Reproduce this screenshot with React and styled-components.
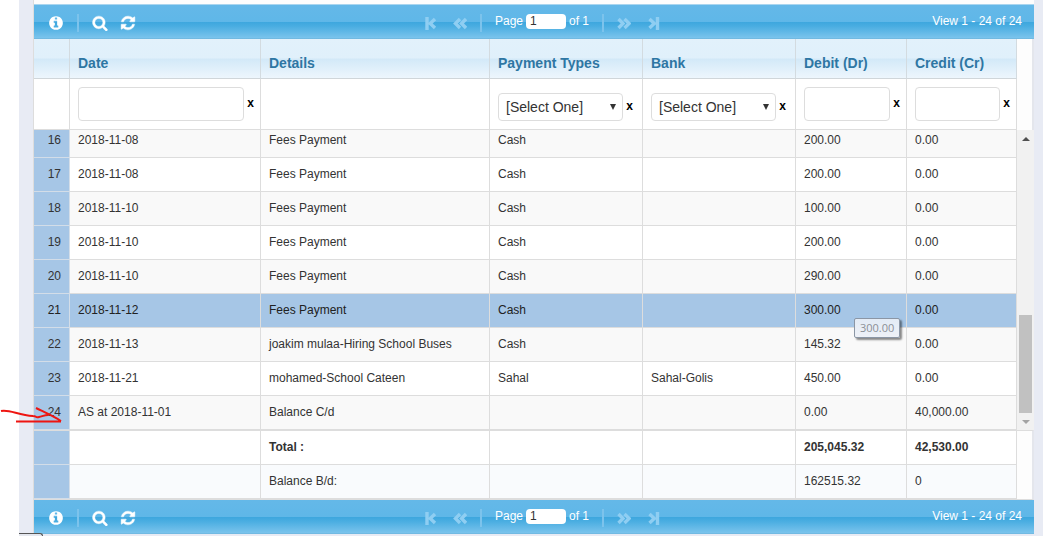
import React from "react";
import styled, { createGlobalStyle } from "styled-components";

const columns = [
  { key: "date", label: "Date", width: 191, filter: "text" },
  { key: "details", label: "Details" },
  { key: "type", label: "Payment Types", width: 153, filter: "select" },
  { key: "bank", label: "Bank", width: 153, filter: "select" },
  { key: "debit", label: "Debit (Dr)", width: 111, filter: "text" },
  { key: "credit", label: "Credit (Cr)", width: 110, filter: "text" },
];

const rows = [
  [16, "2018-11-08", "Fees Payment", "Cash", "", "200.00", "0.00"],
  [17, "2018-11-08", "Fees Payment", "Cash", "", "200.00", "0.00"],
  [18, "2018-11-10", "Fees Payment", "Cash", "", "100.00", "0.00"],
  [19, "2018-11-10", "Fees Payment", "Cash", "", "200.00", "0.00"],
  [20, "2018-11-10", "Fees Payment", "Cash", "", "290.00", "0.00"],
  [21, "2018-11-12", "Fees Payment", "Cash", "", "300.00", "0.00"],
  [22, "2018-11-13", "joakim mulaa-Hiring School Buses", "Cash", "", "145.32", "0.00"],
  [23, "2018-11-21", "mohamed-School Cateen", "Sahal", "Sahal-Golis", "450.00", "0.00"],
  [24, "AS at 2018-11-01", "Balance C/d", "", "", "0.00", "40,000.00"],
];

const hoveredRow = 21;

const Columns = () => (
  <colgroup>
    <col width="36" />
    {columns.map(({ key, width }) => (
      <col key={key} width={width} />
    ))}
  </colgroup>
);

const icons = {
  info: "M1152 1376v-160q0-14-9-23t-23-9h-96v-512q0-14-9-23t-23-9h-320q-14 0-23 9t-9 23v160q0 14 9 23t23 9h96v320h-96q-14 0-23 9t-9 23v160q0 14 9 23t23 9h448q14 0 23-9t9-23zm-128-896v-160q0-14-9-23t-23-9h-192q-14 0-23 9t-9 23v160q0 14 9 23t23 9h192q14 0 23-9t9-23zm640 416q0 209-103 385.5t-279.5 279.5-385.5 103-385.5-103-279.5-279.5-103-385.5 103-385.5 279.5-279.5 385.5-103 385.5 103 279.5 279.5 103 385.5z",
  search:
    "M1216 832q0-185-131.5-316.5t-316.5-131.5-316.5 131.5-131.5 316.5 131.5 316.5 316.5 131.5 316.5-131.5 131.5-316.5zm512 832q0 52-38 90t-90 38q-54 0-90-38l-343-342q-179 124-399 124-143 0-273.5-55.5t-225-150-150-225-55.5-273.5 55.5-273.5 150-225 225-150 273.5-55.5 273.5 55.5 225 150 150 225 55.5 273.5q0 220-124 399l343 343q37 37 37 90z",
  refresh:
    "M1639 1056q0 5-1 7-64 268-268 434.5t-478 166.5q-146 0-282.5-55t-243.5-157l-129 129q-19 19-45 19t-45-19-19-45v-448q0-26 19-45t45-19h448q26 0 45 19t19 45-19 45l-137 137q71 66 161 102t187 36q134 0 250-65t186-179q11-17 53-117 8-23 30-23h192q13 0 22.5 9.5t9.5 22.5zm25-800v448q0 26-19 45t-45 19h-448q-26 0-45-19t-19-45 19-45l138-138q-148-137-349-137-134 0-250 65t-186 179q-11 17-53 117-8 23-30 23h-199q-13 0-22.5-9.5t-9.5-22.5v-7q65-268 270-434.5t480-166.5q146 0 284 55.5t245 156.5l130-129q19-19 45-19t45 19 19 45z",
};

const ToolIcon = ({ name }) => (
  <svg width="16" height="16" viewBox="0 0 1792 1792" fill="#fff">
    <path
      d={icons[name]}
      stroke="#fff"
      strokeWidth={name === "info" ? 0 : 50}
    />
  </svg>
);

const arrows = {
  first: "M4 1V14M12 3L7.200 7.500L12 12",
  prev: "M7 3L2.500 7.500L7 12M13 3L8.500 7.500L13 12",
  next: "M1.500 3L6 7.500L1.500 12M7.500 3L12 7.500L7.500 12",
  last: "M10.500 1V14M2.500 3L7.300 7.500L2.500 12",
};

const Arrow = ({ name }) => (
  <svg width="14" height="14" viewBox="0 0 14 14" fill="none">
    <path d={arrows[name]} stroke="#8fcef2" strokeWidth="3.4" />
  </svg>
);

const Pager = ({ id }) => (
  <Toolbar>
    <Tools>
      <IconButton aria-label="View record">
        <ToolIcon name="info" />
      </IconButton>
      <Separator />
      <IconButton aria-label="Search">
        <ToolIcon name="search" />
      </IconButton>
      <IconButton aria-label="Reload">
        <ToolIcon name="refresh" />
      </IconButton>
    </Tools>
    <Pages>
      <PageButton aria-label="First page" disabled>
        <Arrow name="first" />
      </PageButton>
      <PageButton aria-label="Previous page" disabled>
        <Arrow name="prev" />
      </PageButton>
      <Separator $tight />
      <PageLabel>
        <label htmlFor={id}>Page</label>
        <PageInput id={id} defaultValue="1" />
        <span>of 1</span>
      </PageLabel>
      <Separator $tight />
      <PageButton aria-label="Next page" disabled>
        <Arrow name="next" />
      </PageButton>
      <PageButton aria-label="Last page" disabled>
        <Arrow name="last" />
      </PageButton>
    </Pages>
    <Summary>View 1 - 24 of 24</Summary>
  </Toolbar>
);

const Filter = ({ column }) => {
  if (!column.filter) return null;
  return (
    <FilterBox $select={column.filter === "select"}>
      {column.filter === "select" ? (
        <SelectBox>
          <Select aria-label={column.label}>
            <option>[Select One]</option>
          </Select>
          <svg width="6" height="6" viewBox="0 0 6 6" fill="#333">
            <path d="M0 0H6L3 6Z" />
          </svg>
        </SelectBox>
      ) : (
        <TextInput aria-label={column.label} />
      )}
      <Clear aria-label={`Clear ${column.label}`}>x</Clear>
    </FilterBox>
  );
};

const Triangle = ({ up }) => (
  <svg width="8" height="4" viewBox="0 0 8 4" fill={up ? "#505050" : "#a3a3a3"}>
    <path d={up ? "M0 4L4 0L8 4Z" : "M0 0L4 4L8 0Z"} />
  </svg>
);

const App = () => (
  <>
    <GlobalStyle />
    <Page>
      <Panel>
        <Pager id="page-top" />
        <Section>
          <Table>
            <Columns />
            <thead>
              <tr>
                <HeadCell />
                {columns.map((column) => (
                  <HeadCell key={column.key}>{column.label}</HeadCell>
                ))}
              </tr>
              <tr>
                <FilterCell />
                {columns.map((column) => (
                  <FilterCell key={column.key}>
                    <Filter column={column} />
                  </FilterCell>
                ))}
              </tr>
            </thead>
          </Table>
        </Section>
        <Body>
          <Viewport>
            <Table>
              <Columns />
              <tbody>
                {rows.map(([number, ...cells]) => (
                  <Row key={number} $active={number === hoveredRow}>
                    <NumberCell>{number}</NumberCell>
                    {cells.map((cell, i) => (
                      <Cell key={columns[i].key}>
                        {cell}
                        {number === hoveredRow && columns[i].key === "debit" && (
                          <Tooltip>{cell}</Tooltip>
                        )}
                      </Cell>
                    ))}
                  </Row>
                ))}
              </tbody>
            </Table>
          </Viewport>
          <Scrollbar>
            <ScrollEnd>
              <Triangle up />
            </ScrollEnd>
            <Thumb />
            <ScrollEnd>
              <Triangle />
            </ScrollEnd>
          </Scrollbar>
        </Body>
        <Section $footer>
          <Table>
            <Columns />
            <tbody>
              <TotalRow $bold>
                <NumberCell />
                <Cell />
                <Cell>Total :</Cell>
                <Cell />
                <Cell />
                <Cell>205,045.32</Cell>
                <Cell>42,530.00</Cell>
              </TotalRow>
              <TotalRow>
                <NumberCell />
                <Cell />
                <Cell>Balance B/d:</Cell>
                <Cell />
                <Cell />
                <Cell>162515.32</Cell>
                <Cell>0</Cell>
              </TotalRow>
            </tbody>
          </Table>
        </Section>
        <Pager id="page-bottom" />
      </Panel>
      <Annotation width="64" height="20" viewBox="0 0 64 20">
        <path d="M1 4C9 2 18 8 33 9C37 9 35 11 39 10C43 9 45 8 48 8M36 1C44 5 53 9 61 14M16 14.500H61" />
      </Annotation>
      <StatusCorner />
    </Page>
  </>
);

const GlobalStyle = createGlobalStyle`
  * {
    box-sizing: border-box;
  }
  body {
    margin: 0;
    background: #fff;
    color: #333;
    font-family: "Liberation Sans", Arial, sans-serif;
    font-size: 12px;
    line-height: 16px;
  }
  button, input, select {
    font: inherit;
    color: inherit;
  }
  svg {
    display: block;
  }
`;

const Page = styled.div`
  position: relative;
  min-height: 100vh;
  margin-left: 19px;
  padding: 0 9px 0 14px;
  background: #e8ebf4;
`;

const Panel = styled.div`
  padding-top: 4px;
  border-left: 1px solid #ddd;
  background: #fdfdfd;
`;

const Toolbar = styled.div`
  display: flex;
  align-items: center;
  height: 35px;
  padding: 2px 12px 0 8px;
  border-top: 1px solid #a9d5ef;
  background: linear-gradient(
    #64b8e8 0,
    #5fb7e8 50%,
    #3ea7de 51%,
    #49ade1 62%,
    #79c3ec 96%,
    #6db4dc 100%
  );
  color: #fff;
  &:last-child {
    height: 34px;
    border-top: 0;
  }
`;

const Tools = styled.div`
  display: flex;
  flex: 1;
  align-items: center;
`;

const Pages = styled.div`
  display: flex;
  align-items: center;
  padding-left: 20px;
`;

const Summary = styled.div`
  flex: 1;
  padding-bottom: 4px;
  text-align: right;
`;

const IconButton = styled.button`
  display: flex;
  align-items: center;
  justify-content: center;
  width: 28px;
  height: 28px;
  padding: 0;
  border: 0;
  background: none;
`;

const PageButton = styled(IconButton)`
  width: 30px;
`;

const Separator = styled.span`
  width: 2px;
  height: 18px;
  margin: 0 ${({ $tight }) => ($tight ? 5 : 7)}px;
  background: #7cc3ec;
`;

const PageLabel = styled.div`
  display: flex;
  align-items: center;
  gap: 3px;
  padding: 0 8px 4px;
`;

const PageInput = styled.input`
  width: 40px;
  height: 15px;
  padding: 0 4px;
  border: 0;
  border-radius: 4px;
  background: #fff;
  color: #333;
`;

const Section = styled.div`
  padding-right: 15px;
  border: solid #ddd;
  border-width: ${({ $footer }) => ($footer ? "1px 2px 1px 0" : "0 2px 0 0")};
  border-right-color: #e4e6ec;
`;

const Table = styled.table`
  width: 100%;
  table-layout: fixed;
  border-collapse: separate;
  border-spacing: 0;
`;

const HeadCell = styled.th`
  height: 40px;
  padding: 8px 8px 0;
  border-right: 1px solid #d3dbe0;
  border-bottom: 1px solid #d0d6da;
  background: linear-gradient(#e2f1fb 0, #e0f0fb 48%, #d3e9f8 52%, #edf6fd 100%);
  color: #2e76a3;
  font-size: 14px;
  text-align: left;
`;

const FilterCell = styled.th`
  height: 51px;
  padding: 0 6px 0 8px;
  border-right: 1px solid #ddd;
  border-bottom: 1px solid #ddd;
  background: #fff;
`;

const FilterBox = styled.div`
  display: flex;
  align-items: center;
  gap: 3px;
  padding: ${({ $select }) => ($select ? "5px 3px 0 0" : 0)};
`;

const TextInput = styled.input`
  flex: 1;
  min-width: 0;
  height: 34px;
  padding: 6px 8px;
  border: 1px solid #ddd;
  border-radius: 4px;
  background: #fff;
`;

const SelectBox = styled.div`
  display: flex;
  flex: 1;
  align-items: center;
  min-width: 0;
  height: 28px;
  padding-right: 6px;
  border: 1px solid #ddd;
  border-radius: 4px;
`;

const Select = styled.select`
  flex: 1;
  min-width: 0;
  height: 26px;
  padding: 0 7px;
  border: 0;
  background: none;
  appearance: none;
  font-size: 14px;
  font-weight: normal;
`;

const Clear = styled.button`
  width: 7px;
  padding: 0 0 2px;
  border: 0;
  background: none;
  color: #000;
  font-weight: bold;
`;

const Body = styled.div`
  display: flex;
  height: 300px;
`;

/* scrolled to the end of the list */
const Viewport = styled.div`
  display: flex;
  flex: 1;
  flex-direction: column;
  justify-content: flex-end;
  min-width: 0;
  overflow: hidden;
`;

const Cell = styled.td`
  position: relative;
  height: 34px;
  padding: 0 8px 2px;
  border-right: 1px solid #ddd;
  border-bottom: 1px solid #ddd;
  white-space: nowrap;
`;

const NumberCell = styled(Cell)`
  border-color: #d3dde8;
  background: #a6c6e6;
  text-align: right;
`;

const Row = styled.tr`
  background: ${({ $active }) => ($active ? "#a6c6e6" : "#fff")};
  color: ${({ $active }) => ($active ? "#212121" : "#333")};
  &:nth-child(odd) {
    background: ${({ $active }) => !$active && "#f9f9f9"};
  }
`;

const TotalRow = styled.tr`
  background: ${({ $bold }) => ($bold ? "#fff" : "#f9fbfd")};
  font-weight: ${({ $bold }) => ($bold ? "bold" : "normal")};
`;

const Tooltip = styled.span`
  position: absolute;
  z-index: 1;
  top: 24px;
  left: 58px;
  padding: 1px 5px;
  border: 1px solid #8b96a5;
  border-radius: 2px;
  background: linear-gradient(#e3ebf5, #eef1f7);
  box-shadow: 2px 2px 2px rgba(0, 0, 0, 0.45);
  color: #8b8f96;
  font-family: "Open Sans", sans-serif;
  font-size: 11px;
`;

const Scrollbar = styled.div`
  display: flex;
  flex-direction: column;
  width: 17px;
  background: #f1f1f1;
`;

const ScrollEnd = styled.div`
  display: flex;
  align-items: center;
  justify-content: center;
  height: 17px;
`;

const Thumb = styled.div`
  height: 98px;
  margin: auto 2px 0;
  background: #c1c1c1;
`;

const Annotation = styled.svg`
  position: absolute;
  top: 407px;
  left: -19px;
  overflow: visible;
  fill: none;
  stroke: #ee1511;
  stroke-width: 2;
`;

const StatusCorner = styled.div`
  position: absolute;
  bottom: 0;
  left: 0;
  width: 24px;
  height: 3px;
  border-top: 1px solid #555;
  border-right: 1px solid #555;
  border-top-right-radius: 3px;
  background: #e4e7ee;
`;

export default App;
